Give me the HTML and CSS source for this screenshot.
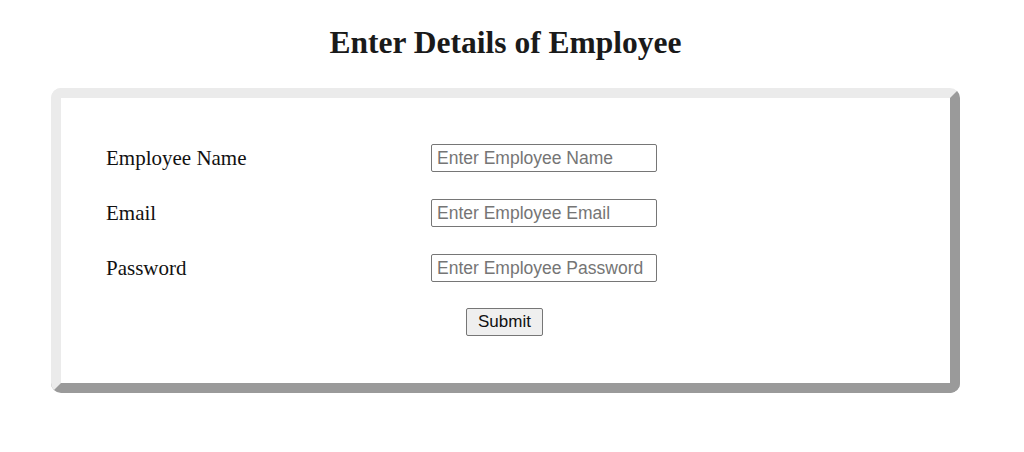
FILE: index.html
```html
<!DOCTYPE html>
<html>
<head>
<meta charset="utf-8">
<link rel="stylesheet" href="styles.css">
</head>
<body>
<div class="page">
  <h1 class="title">Enter Details of Employee</h1>
  <form class="card">
    <div class="grid">
      <label class="label" for="name">Employee Name</label>
      <input class="field" id="name" type="text" placeholder="Enter Employee Name">
      <label class="label" for="email">Email</label>
      <input class="field" id="email" type="text" placeholder="Enter Employee Email">
      <label class="label" for="pw">Password</label>
      <input class="field" id="pw" type="password" placeholder="Enter Employee Password">
    </div>
    <div class="actions">
      <button class="btn" type="button">Submit</button>
    </div>
  </form>
</div>
</body>
</html>
```
FILE: styles.css
```css
html, body {
  margin: 0;
  padding: 0;
  background: #ffffff;
}
.page {
  width: 909px;
  margin-left: 51px;
  padding-top: 25px;
}
.title {
  margin: 0 0 27px 0;
  text-align: center;
  font-family: "Liberation Serif", "Times New Roman", serif;
  font-weight: bold;
  font-size: 31.5px;
  color: #1a1a1a;
  line-height: 36px;
}
.card {
  box-sizing: border-box;
  width: 909px;
  height: 305px;
  border: 10px solid;
  border-color: #ebebeb #9a9a9a #9a9a9a #ebebeb;
  border-radius: 10px;
  padding: 46px 0 0 45px;
  display: flex;
  flex-direction: column;
}
.grid {
  display: grid;
  grid-template-columns: 325px 226px;
  row-gap: 27px;
  align-items: center;
}
.label {
  font-family: "Liberation Serif", "Times New Roman", serif;
  font-size: 21px;
  color: #111;
}
.field {
  box-sizing: border-box;
  width: 226px;
  height: 28px;
  border: 1px solid #767676;
  border-radius: 2px;
  padding: 0 5px;
  font-family: "Liberation Sans", Arial, sans-serif;
  font-size: 17.5px;
  color: #222;
  background: #fff;
}
.field::placeholder {
  color: #757575;
}
.actions {
  display: flex;
  justify-content: center;
  margin-top: 26px;
  margin-left: -47px;
}
.btn {
  box-sizing: border-box;
  width: 77px;
  height: 28px;
  background: #efefef;
  border: 1px solid #767676;
  border-radius: 2px;
  font-family: "Liberation Sans", Arial, sans-serif;
  font-size: 17px;
  color: #111;
  padding: 0;
}
```
